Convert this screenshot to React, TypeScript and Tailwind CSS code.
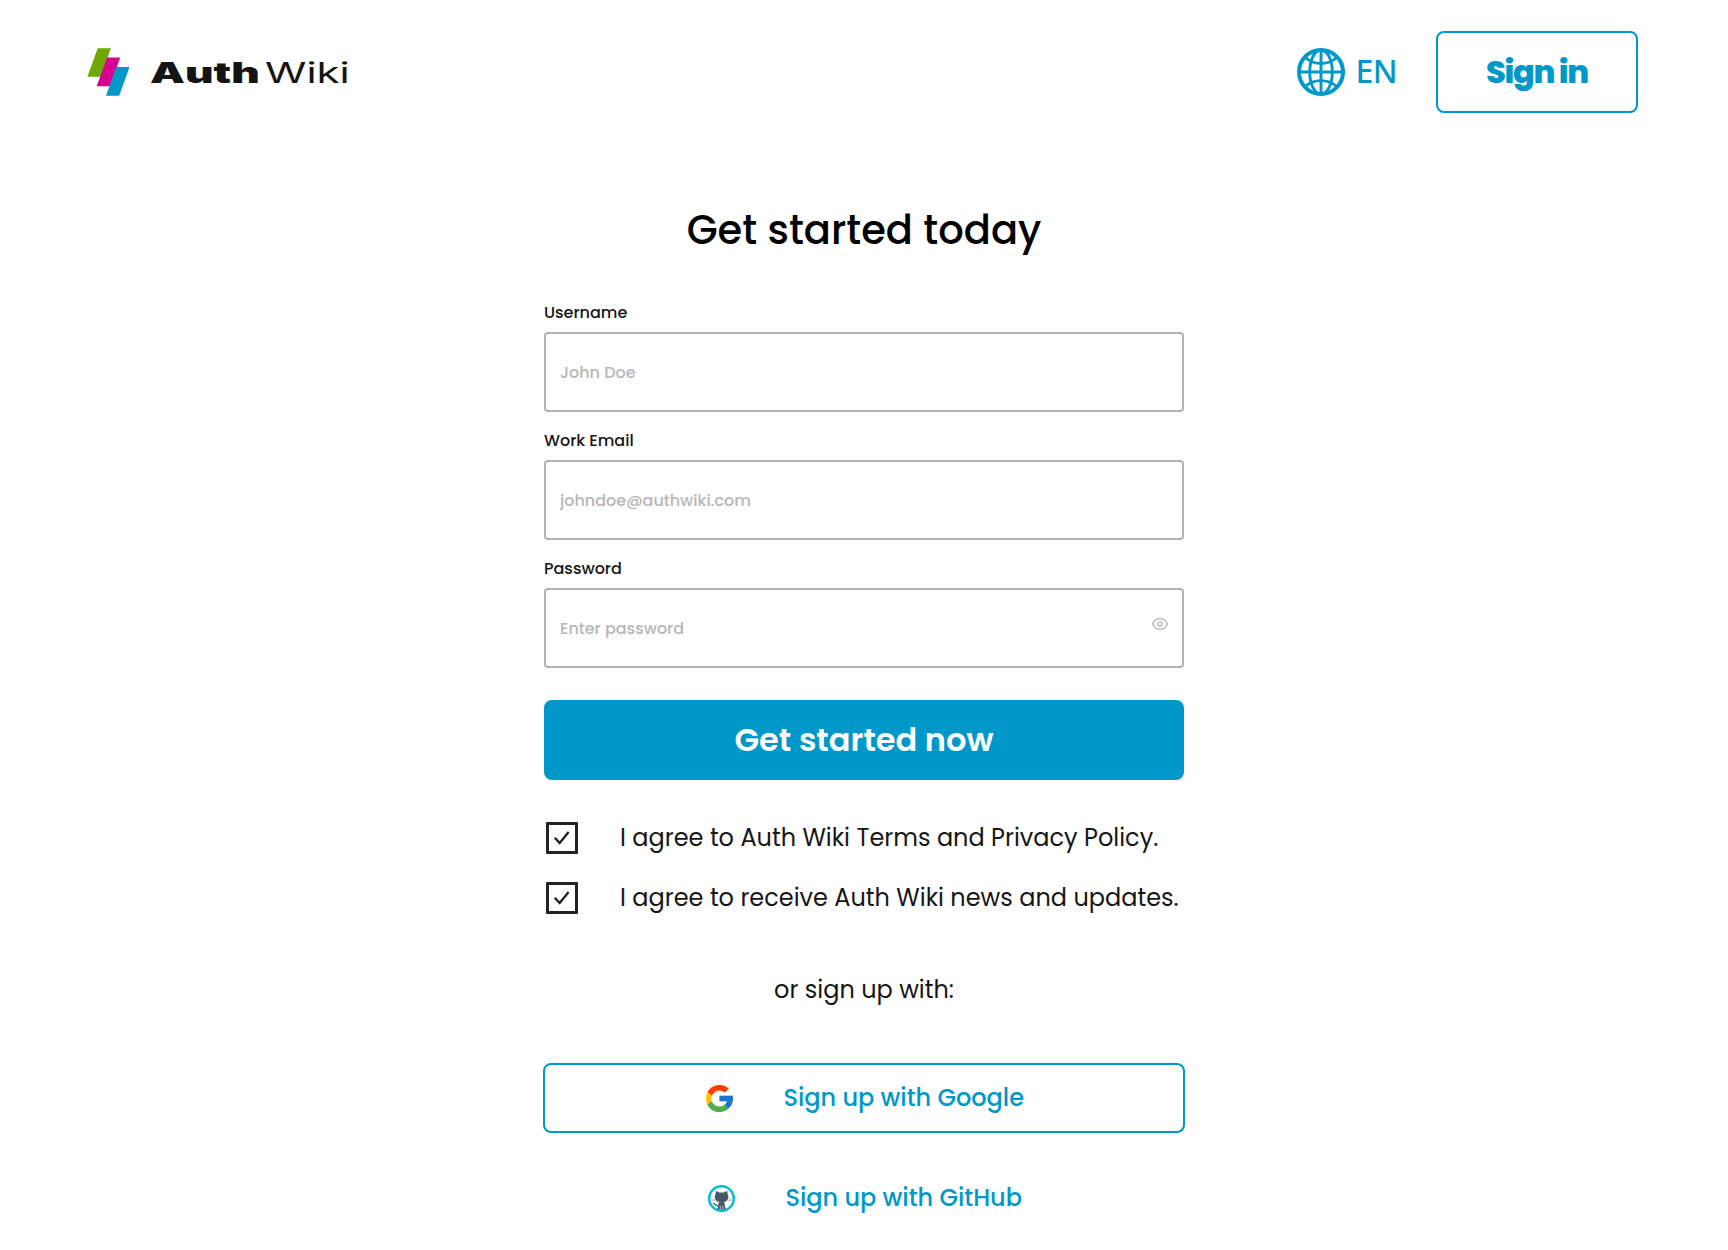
import { useState } from "react";

function LogoMark() {
  return (
    <svg className="h-12 w-[43px]" viewBox="0 0 43 48">
      <path d="M10.7 0.300H23.9L13.6 28.800H0.4Z" fill="#6ea800" />
      <path d="M20 9.600H33.2L22.9 38.200H9.7Z" fill="#d8008f" />
      <path d="M29.3 19.100H42.5L32.2 47.700H19Z" fill="#0098c9" />
    </svg>
  );
}

function GlobeIcon() {
  return (
    <svg className="size-12" viewBox="0 0 48 48" fill="none" stroke="#0098c9" strokeWidth="2.9">
      <circle cx="24" cy="24" r="22" strokeWidth="4" />
      <path d="M24 2V46M2 24H46" />
      <ellipse cx="24" cy="24" rx="11.3" ry="22" />
      <path d="M8.3 9.5C12.5 13.3 17.9 15.4 24 15.4S35.5 13.3 39.7 9.5" />
      <path d="M8.3 38.5C12.5 34.7 17.9 32.6 24 32.6S35.5 34.7 39.7 38.5" />
    </svg>
  );
}

function EyeIcon() {
  return (
    <svg className="h-3 w-4" viewBox="0 0 16 12" fill="none" stroke="#b2b2b2" strokeWidth="1.3">
      <path d="M0.7 6C2 2.6 4.7 0.7 8 0.7S14 2.6 15.3 6C14 9.4 11.3 11.3 8 11.3S2 9.4 0.7 6Z" />
      <circle cx="8" cy="6" r="2.1" />
    </svg>
  );
}

function GoogleIcon() {
  return (
    <svg className="size-[27px]" viewBox="4 4 40 40">
      <path fill="#FFC107" d="M43.611 20.083H42V20H24v8h11.303c-1.649 4.657-6.080 8-11.303 8-6.627 0-12-5.373-12-12s5.373-12 12-12c3.059 0 5.842 1.154 7.961 3.039l5.657-5.657C34.046 6.053 29.268 4 24 4 12.955 4 4 12.955 4 24s8.955 20 20 20 20-8.955 20-20c0-1.341-.138-2.650-.389-3.917z" />
      <path fill="#FF3D00" d="M6.306 14.691l6.571 4.819C14.655 15.108 18.961 12 24 12c3.059 0 5.842 1.154 7.961 3.039l5.657-5.657C34.046 6.053 29.268 4 24 4 16.318 4 9.656 8.337 6.306 14.691z" />
      <path fill="#4CAF50" d="M24 44c5.166 0 9.860-1.977 13.409-5.192l-6.190-5.238C29.211 35.091 26.715 36 24 36c-5.202 0-9.619-3.317-11.283-7.946l-6.522 5.025C9.505 39.556 16.227 44 24 44z" />
      <path fill="#1976D2" d="M43.611 20.083H42V20H24v8h11.303c-.792 2.237-2.231 4.166-4.087 5.571l6.193 5.238C36.971 39.205 44 34 44 24c0-1.341-.138-2.650-.389-3.917z" />
    </svg>
  );
}

function GitHubIcon() {
  return (
    <svg className="size-[27px]" viewBox="0 0 27 27">
      <circle cx="13.5" cy="13.5" r="12.3" fill="#fff" stroke="#00bcd4" strokeWidth="2.4" />
      <g transform="translate(-1.5 -0.6) scale(1.1 1.04)">
        <path
          fill="#455a64"
          d="M8.600 6.700C9.700 6.700 10.700 7.400 11.400 7.900C12.800 7.600 14.600 7.600 16 7.900C16.700 7.400 17.700 6.700 18.800 6.700C19.200 7.600 19.200 8.500 19 9.200C19.800 10.200 20 11.200 19.800 12.600C19.500 15.300 18.100 16.500 15.800 16.900C16.400 17.400 16.700 18.100 16.700 19V20.800C16.700 21.600 17 22.200 17.500 22.700L17.200 24C15 24.600 12 24.600 9.900 24L9.900 22.700C10.400 22.200 10.600 21.600 10.600 20.900C8.900 21.100 8 20.600 7.300 19.500C6.800 18.700 6.300 18.100 5.500 17.800C6.800 17.500 7.600 18.100 8.200 18.900C8.900 19.800 9.600 20 10.700 19.700C10.700 18.500 11 17.500 11.600 16.900C9.300 16.500 7.900 15.300 7.600 12.600C7.400 11.200 7.600 10.200 8.400 9.200C8.200 8.500 8.200 7.600 8.600 6.700Z"
        />
        <path d="M12.500 20.500V24.300M14.900 20.500V24.300" stroke="#fff" strokeWidth="0.6" />
        <path d="M4 13.800L7.400 14.100M4.300 16L7.800 15.200M23.400 13.800L20 14.100M23.100 16L19.600 15.200" stroke="#455a64" strokeWidth="0.35" fill="none" />
      </g>
    </svg>
  );
}

type FieldProps = {
  id: string;
  label: string;
  type: string;
  placeholder: string;
  onReveal?: () => void;
};

function Field({ id, label, type, placeholder, onReveal }: FieldProps) {
  return (
    <div>
      <label htmlFor={id} className="block h-6 pt-px text-base leading-6 font-medium text-[#161616]">
        {label}
      </label>
      <div className="mt-2 flex h-20 items-center rounded border-2 border-[#b2b2b2] px-[14px]">
        <input
          id={id}
          type={type}
          placeholder={placeholder}
          className="h-full min-w-0 flex-1 bg-transparent pt-px text-base font-medium outline-none placeholder:text-[#b7b7b7] placeholder:opacity-100"
        />
        {onReveal && (
          <button type="button" aria-label="Show password" onClick={onReveal} className="mb-2">
            <EyeIcon />
          </button>
        )}
      </div>
    </div>
  );
}

function Agreement({ text }: { text: string }) {
  const [checked, setChecked] = useState(true);
  return (
    <div className="flex h-8 items-center pl-0.5">
      <button
        type="button"
        role="checkbox"
        aria-checked={checked}
        aria-label={text}
        onClick={() => setChecked(!checked)}
        className="grid size-8 shrink-0 place-items-center rounded-[1px] border-3 border-[#222]"
      >
        {checked && (
          <svg className="h-[14px] w-4" viewBox="0 0 16 14" fill="none" stroke="#222" strokeWidth="2.3">
            <path d="M0.8 6.8L5.7 12L14.6 1" />
          </svg>
        )}
      </button>
      <span className="ml-[42px] text-2xl leading-8 whitespace-nowrap text-[#161616]">{text}</span>
    </div>
  );
}

export default function App() {
  const [visible, setVisible] = useState(false);
  return (
    <div className="min-h-[1250px] bg-[#fefefe] font-['Poppins','Inter',sans-serif]">
      <header className="flex items-center justify-between pt-[31px] pr-[90px] pl-[87px]">
        <a href="#" className="flex items-center">
          <LogoMark />
          <span className="ml-5 flex h-12 items-center pt-px font-['Inter',sans-serif] text-[28px] leading-none text-[#141414]">
            <span className="w-[115px] origin-left scale-x-[1.57] font-black">Auth</span>
            <span className="w-[83px] origin-left scale-x-[1.5]">Wiki</span>
          </span>
        </a>
        <div className="flex items-center">
          <button type="button" className="flex items-center font-['Noto_Sans','Open_Sans',sans-serif] text-[32px] leading-none font-medium text-[#0098c9]">
            <GlobeIcon />
            <span className="ml-[11px] pb-0.5 tracking-[-0.6px]">EN</span>
          </button>
          <a
            href="#"
            className="ml-[39px] flex h-[82px] w-[202px] items-center justify-center rounded-lg border-2 border-[#0098c9] text-[32px] leading-none font-extrabold tracking-[-1.35px] text-[#0098c9]"
          >
            Sign in
          </a>
        </div>
      </header>

      <main className="mx-auto mt-[93px] w-[640px]">
        <h1 className="text-center text-[40px] leading-[48px] font-medium text-black">Get started today</h1>

        <form className="mt-[46px]" onSubmit={(e) => e.preventDefault()}>
          <div className="flex flex-col gap-4">
            <Field id="username" label="Username" type="text" placeholder="John Doe" />
            <Field id="email" label="Work Email" type="email" placeholder="johndoe@authwiki.com" />
            <Field
              id="password"
              label="Password"
              type={visible ? "text" : "password"}
              placeholder="Enter password"
              onReveal={() => setVisible(!visible)}
            />
          </div>
          <button type="submit" className="mt-8 h-20 w-full rounded-lg bg-[#0098c9] text-[32px] leading-none font-semibold text-white">
            Get started now
          </button>
          <div className="mt-[42px] flex flex-col gap-7">
            <Agreement text="I agree to Auth Wiki Terms and Privacy Policy." />
            <Agreement text="I agree to receive Auth Wiki news and updates." />
          </div>
        </form>

        <p className="mt-[60px] pt-px text-center text-2xl leading-[30px] text-[#161616]">or sign up with:</p>

        <button
          type="button"
          className="-mx-px mt-[58px] flex h-[70px] w-[642px] items-center rounded-lg border-2 border-[#0098c9] pl-[161px] text-2xl font-medium text-[#0098c9]"
        >
          <GoogleIcon />
          <span className="ml-[50.5px]">Sign up with Google</span>
        </button>
        <button type="button" className="mt-[30px] flex h-[70px] w-full items-center pl-[164px] text-2xl font-medium text-[#0098c9]">
          <GitHubIcon />
          <span className="ml-[50.5px]">Sign up with GitHub</span>
        </button>
      </main>
    </div>
  );
}
